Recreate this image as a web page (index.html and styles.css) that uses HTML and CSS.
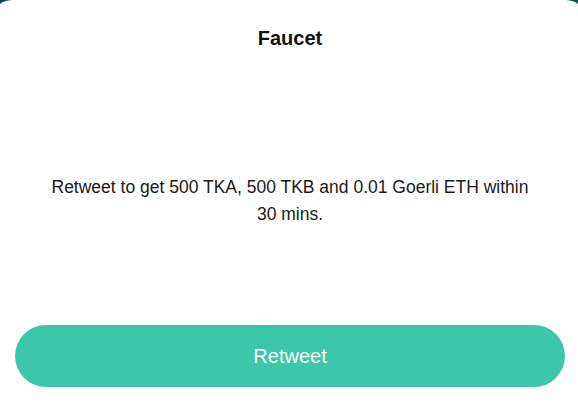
FILE: index.html
```html
<!DOCTYPE html>
<html lang="en">
<head>
    <meta charset="UTF-8">
    <meta name="viewport" content="width=device-width, initial-scale=1.0">
    <title>Faucet</title>
    <link rel="stylesheet" href="styles.css">
</head>
<body>
    <div class="faucet-modal">
        <h2 class="faucet-title">Faucet</h2>
        <div class="faucet-body">
            <p>Retweet to get 500 TKA, 500 TKB and 0.01 Goerli ETH within 30 mins.</p>
        </div>
        <button class="retweet-btn">Retweet</button>
    </div>
</body>
</html>
```

FILE: styles.css
```css
body {
    font-family: 'Liberation Sans', Arial, sans-serif;
    background-color: #0d4d52;
    margin: 0;
    height: 100vh;
    overflow: hidden;
}
.faucet-modal {
    background: white;
    margin: 0 -8px;
    height: 100%;
    border-radius: 20px 20px 0 0;
    display: flex;
    flex-direction: column;
    align-items: center;
    padding: 0 21px 0 23px;
}
.faucet-title {
    margin: 27px 0 0;
    font-size: 20px;
    font-weight: bold;
    color: #111;
}
.faucet-body {
    box-sizing: border-box;
    height: 275px;
    padding: 27px 30px 0;
    display: flex;
    align-items: center;
    justify-content: center;
}
.faucet-body p {
    margin: 0;
    font-size: 17.5px;
    line-height: 27px;
    text-align: center;
    color: #1a1a1a;
}
.retweet-btn {
    width: 100%;
    height: 62px;
    border: none;
    border-radius: 31px;
    background: #3cc8a8;
    color: white;
    font-family: inherit;
    font-size: 20px;
    cursor: pointer;
}
```
